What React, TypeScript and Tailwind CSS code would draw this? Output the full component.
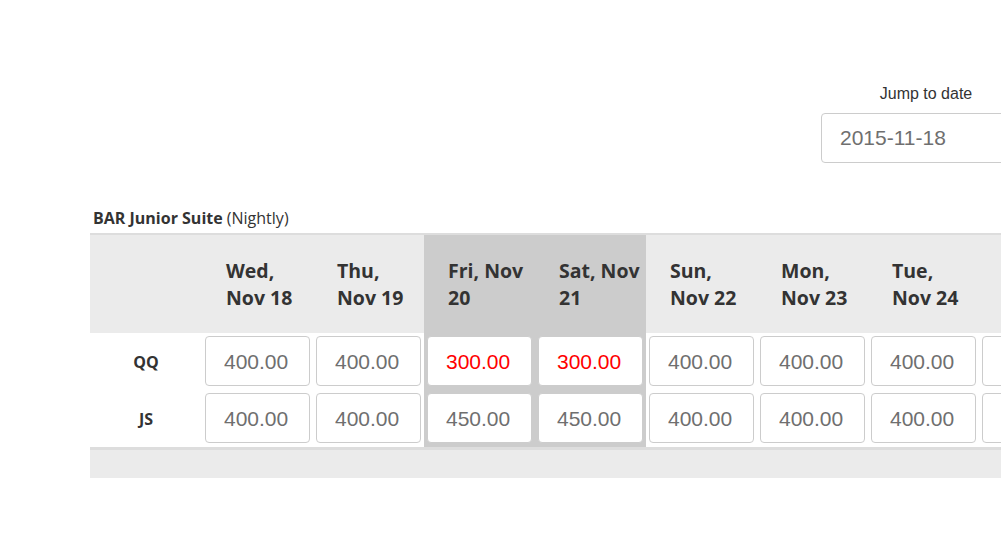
const days = [
  { label: 'Wed, Nov 18', weekend: false },
  { label: 'Thu, Nov 19', weekend: false },
  { label: 'Fri, Nov 20', weekend: true },
  { label: 'Sat, Nov 21', weekend: true },
  { label: 'Sun, Nov 22', weekend: false },
  { label: 'Mon, Nov 23', weekend: false },
  { label: 'Tue, Nov 24', weekend: false },
  { label: 'Wed, Nov 25', weekend: false },
];

const rooms = [
  { code: 'QQ', rates: ['400.00', '400.00', '300.00', '300.00', '400.00', '400.00', '400.00', '400.00'], changed: [2, 3], pending: [7] },
  { code: 'JS', rates: ['400.00', '400.00', '450.00', '450.00', '400.00', '400.00', '400.00', '400.00'], changed: [], pending: [7] },
];

export default function App() {
  return (
    <div className="w-[1001px] h-[536px] overflow-hidden bg-white">
      {/* Jump to date */}
      <div className="pt-[84px] pl-[821px]">
        <div className="w-[210px]">
          <p className="text-center text-[16px] leading-[20px] text-[#333] font-['Liberation_Sans',Arial,sans-serif]">
            Jump to date
          </p>
          <input
            readOnly
            value="2015-11-18"
            className="mt-[9px] w-[210px] h-[50px] pl-[18px] border border-[#ccc] rounded-[4px] text-[21px] text-[#6f6f6f] font-['Liberation_Sans',Arial,sans-serif] outline-none"
          />
        </div>
      </div>

      {/* Rate grid */}
      <div className="pl-[90px] mt-[45px]">
        <p className="pl-[3px] text-[16px] leading-[21px] text-[#333] font-['Open_Sans',sans-serif]">
          <span className="font-bold">BAR Junior Suite</span>{' '}
          <span>(Nightly)</span>
        </p>

        <table className="mt-[4px] w-[1000px] table-fixed border-collapse border-t-2 border-[#dddddd]">
          <thead>
            <tr className="bg-[#ebebeb]">
              <th className="w-[112px] h-[99px]"></th>
              {days.map((d) => (
                <th
                  key={d.label}
                  className={`w-[111px] h-[99px] pl-[24px] pr-[4px] text-left align-middle text-[19.5px] leading-[27px] font-bold text-[#333] font-['Open_Sans',sans-serif] ${
                    d.weekend ? 'bg-[#cccccc]' : ''
                  }`}
                >
                  {d.label}
                </th>
              ))}
            </tr>
          </thead>
          <tbody>
            {rooms.map((room) => (
              <tr key={room.code}>
                <td className="text-center align-middle text-[16px] font-bold text-[#333] font-['Open_Sans',sans-serif]">
                  {room.code}
                </td>
                {room.rates.map((rate, i) => (
                  <td
                    key={i}
                    className={`pt-[3px] pb-[4px] px-[3px] ${days[i].weekend ? 'bg-[#cccccc]' : ''}`}
                  >
                    <input
                      readOnly
                      value={rate}
                      className={`block w-[105px] h-[50px] pl-[18px] pt-[1px] bg-white border border-[#ccc] rounded-[4px] text-[21px] font-['Liberation_Sans',Arial,sans-serif] outline-none ${
                        room.changed.includes(i)
                          ? 'text-[#ff0000]'
                          : room.pending.includes(i)
                          ? 'text-[#e8c440]'
                          : 'text-[#6f6f6f]'
                      }`}
                    />
                  </td>
                ))}
              </tr>
            ))}
          </tbody>
          <tfoot>
            <tr className="bg-[#ebebeb] border-t-[3px] border-[#dddddd]">
              <td colSpan={9} className="h-[29px]"></td>
            </tr>
          </tfoot>
        </table>
      </div>
    </div>
  );
}
